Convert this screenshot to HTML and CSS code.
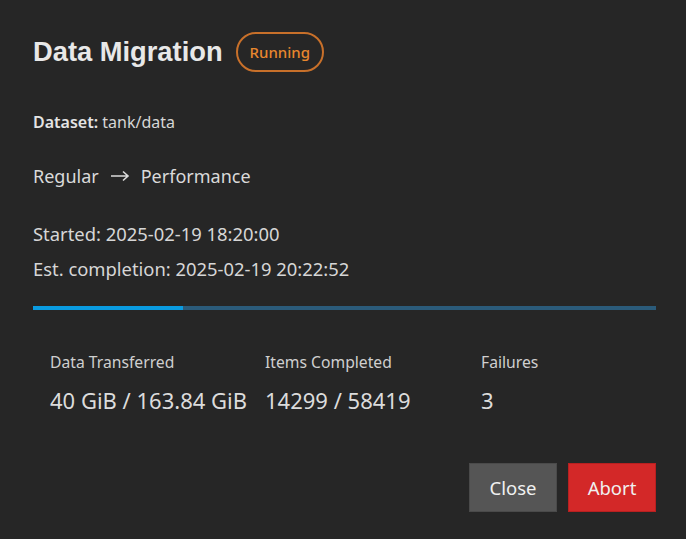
FILE: index.html
```html
<!DOCTYPE html>
<html lang="en">
<head>
  <meta charset="UTF-8">
  <title>Data Migration</title>
  <link rel="stylesheet" href="styles.css">
</head>
<body>
  <div class="dialog">
    <div class="header">
      <h1 class="title">Data Migration</h1>
      <span class="badge">Running</span>
    </div>

    <div class="dataset"><b>Dataset:</b> tank/data</div>

    <div class="tiers">
      <span>Regular</span>
      <svg class="arrow" width="20" height="12" viewBox="0 0 20 12">
        <path d="M1 6H18M13 1.5L18 6L13 10.5" fill="none" stroke="#dadada" stroke-width="1.6"/>
      </svg>
      <span>Performance</span>
    </div>

    <div class="times">
      <div>Started: 2025-02-19 18:20:00</div>
      <div>Est. completion: 2025-02-19 20:22:52</div>
    </div>

    <div class="progress">
      <div class="progress-fill" style="width: 24.1%"></div>
    </div>

    <div class="stats">
      <div class="stat">
        <div class="stat-label">Data Transferred</div>
        <div class="stat-value">40 GiB / 163.84 GiB</div>
      </div>
      <div class="stat">
        <div class="stat-label">Items Completed</div>
        <div class="stat-value">14299 / 58419</div>
      </div>
      <div class="stat">
        <div class="stat-label">Failures</div>
        <div class="stat-value">3</div>
      </div>
    </div>

    <div class="actions">
      <button class="btn btn-close">Close</button>
      <button class="btn btn-abort">Abort</button>
    </div>
  </div>
</body>
</html>
```

FILE: styles.css
```css
body {
  margin: 0;
  background-color: #262626;
  font-family: "Noto Sans", "Open Sans", sans-serif;
  color: #dcdcdc;
}

.dialog {
  width: 686px;
  height: 539px;
  box-sizing: border-box;
  padding: 32px 30px 0 33px;
}

.header {
  display: flex;
  align-items: center;
  gap: 13px;
  height: 40px;
}

.title {
  margin: 0;
  font-family: "Liberation Sans", Arial, sans-serif;
  font-size: 27.3px;
  font-weight: bold;
  color: #e8e8e8;
}

.badge {
  box-sizing: border-box;
  height: 40px;
  padding: 0 12px;
  display: flex;
  align-items: center;
  border: 2px solid #c8702a;
  border-radius: 20px;
  color: #e8872e;
  font-size: 15px;
  font-weight: 500;
}

.dataset {
  margin-top: 39px;
  font-size: 16px;
  line-height: 22px;
  color: #d6d6d6;
}

.dataset b {
  font-weight: 600;
  color: #e4e4e4;
}

.tiers {
  display: flex;
  align-items: center;
  gap: 11px;
  margin-top: 31px;
  font-size: 18px;
  line-height: 24px;
  color: #dadada;
}

.times {
  margin-top: 28px;
  font-size: 18.4px;
  line-height: 35px;
  color: #d6d6d6;
}

.progress {
  margin-top: 20px;
  height: 4px;
  background-color: #2b5b7a;
}

.progress-fill {
  height: 100%;
  background-color: #0a9be0;
}

.stats {
  display: grid;
  grid-template-columns: 215px 216px 1fr;
  margin-top: 42px;
  padding-left: 17px;
}

.stat-label {
  font-size: 15.7px;
  line-height: 20px;
  color: #cfcfcf;
}

.stat-value {
  margin-top: 15px;
  font-size: 22px;
  line-height: 26px;
  color: #dcdcdc;
}

.actions {
  display: flex;
  justify-content: flex-end;
  gap: 11px;
  margin-top: 50px;
}

.btn {
  width: 88px;
  height: 49px;
  border: 1px solid transparent;
  font-family: inherit;
  font-size: 18.5px;
  color: #f0f0f0;
  cursor: pointer;
}

.btn-close {
  background-color: #555555;
  border-color: #4a4a4a;
}

.btn-abort {
  background-color: #d32828;
  border-color: #b82020;
}
```
